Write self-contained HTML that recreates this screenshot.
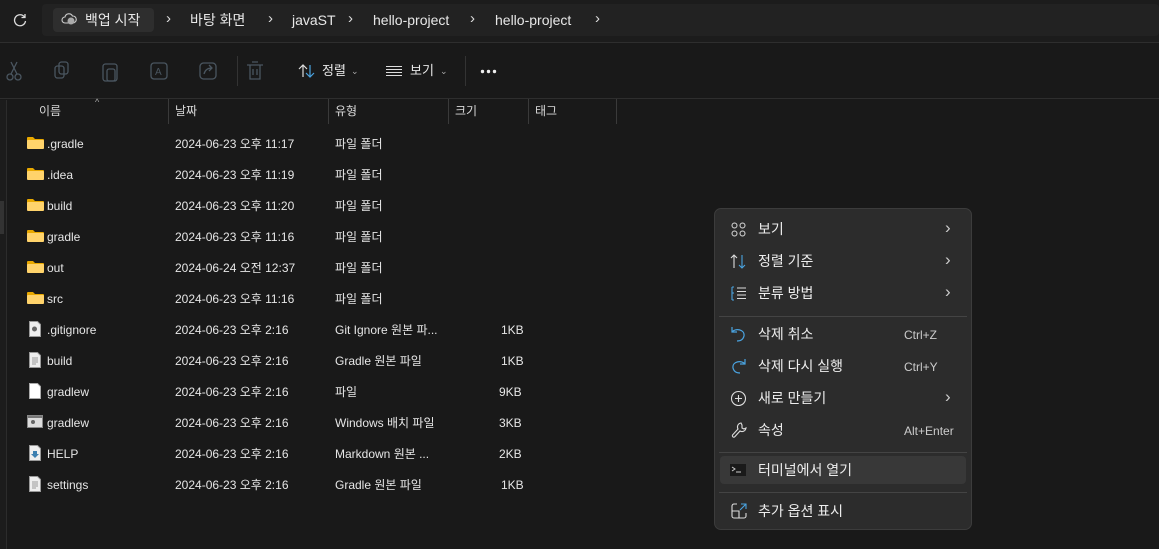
<!DOCTYPE html>
<html><head><meta charset="utf-8"><style>
*{margin:0;padding:0;box-sizing:border-box}
body{width:1159px;height:549px;overflow:hidden;background:#191919;font-family:"Liberation Sans","Noto Sans CJK KR",sans-serif;color:#e6e6e6;position:relative;font-size:12px}
span{line-height:16px}
.abs{position:absolute}
.top{left:0;top:0;width:1159px;height:43px;background:#1c1c1c;border-bottom:1px solid #2e2e2e}
.crumb{left:42px;top:4px;width:1117px;height:32px;background:#222;border-radius:4px}
.bc{position:absolute;top:12px;font-size:14px;color:#e8e8e8}
.chev{position:absolute;top:11px;font-size:15px;color:#ddd}
.tb{left:0;top:44px;width:1159px;height:55px;background:#191919;border-bottom:1px solid #2e2e2e}
.hdr{top:103px;font-size:12px;color:#d8d8d8}
.vl{top:99px;width:1px;height:25px;background:#3a3a3a}
.row{position:absolute;left:0;height:20px;font-size:12px}
.row span{position:absolute;top:2px;white-space:nowrap}
.menu{left:714px;top:208px;width:258px;height:322px;background:#2c2c2c;border:1px solid #3c3c3c;border-radius:7px}
.mi{position:absolute;left:0;width:256px;height:30px;font-size:14px;color:#eee}
.mi .t{position:absolute;left:43px;top:7px}
.mi .k{position:absolute;left:189px;top:8px;font-size:12px;color:#ccc}
.mi .a{position:absolute;left:230px;top:6px;color:#ccc;font-size:17px}
.sep{position:absolute;left:4px;width:248px;height:1px;background:#444}
</style></head><body>
<div class="abs top"></div>
<svg class="abs" style="left:12px;top:12px" width="16" height="16" viewBox="0 0 16 16"><path d="M12.5 5A5.5 5.5 0 1 0 13.5 9" fill="none" stroke="#ddd" stroke-width="1.3"/><path d="M13 2v3.5H9.5" fill="none" stroke="#ddd" stroke-width="1.3"/></svg>
<div class="abs crumb"></div>
<div class="abs" style="left:53px;top:8px;width:101px;height:24px;background:#2e2e2e;border-radius:4px"></div>
<svg class="abs" style="left:61px;top:12px" width="16" height="14" viewBox="0 0 16 14"><path d="M4 11a3 3 0 0 1 0-6 4 4 0 0 1 7.5-1A3.5 3.5 0 0 1 12 11z" fill="none" stroke="#ccc" stroke-width="1.1"/><circle cx="10" cy="9" r="3.5" fill="#aaa"/></svg>
<span class="bc" style="left:85px">백업 시작</span>
<span class="chev" style="left:166px">›</span>
<span class="bc" style="left:190px">바탕 화면</span>
<span class="chev" style="left:268px">›</span>
<span class="bc" style="left:292px">javaST</span>
<span class="chev" style="left:348px">›</span>
<span class="bc" style="left:373px">hello-project</span>
<span class="chev" style="left:470px">›</span>
<span class="bc" style="left:495px">hello-project</span>
<span class="chev" style="left:595px">›</span>
<div class="abs tb"></div>
<svg class="abs" style="left:0;top:56px" width="460" height="30" viewBox="0 0 460 30" fill="none" stroke="#4a5660" stroke-width="1.3">
<circle cx="10" cy="21" r="3"/><circle cx="18" cy="21" r="3"/><path d="M11 18 17 6M17 18 11 6"/>
<rect x="55" y="10" width="9" height="12" rx="2.5"/><rect x="59" y="6" width="9" height="12" rx="2.5"/>
<rect x="103" y="8" width="14" height="17" rx="2.5"/><rect x="107" y="13" width="8" height="12" rx="2"/>
<rect x="151" y="7" width="16" height="16" rx="3"/><text x="155" y="19" font-size="10" fill="#4a5660" stroke="none">A</text>
<rect x="200" y="7" width="16" height="16" rx="3.5"/><path d="M204 18c1-4 4-6 8-6M209 9l3 3-3 3"/>
<path d="M247 9h16M250 9v14h10V9M252 6h6M253 13v6M257 13v6"/>
</svg>
<div class="abs" style="left:237px;top:56px;width:1px;height:30px;background:#333"></div>
<svg class="abs" style="left:298px;top:63px" width="18" height="16" viewBox="0 0 18 16" fill="none" stroke-width="1.2"><path d="M5 14V2M1 6l4-4 4 4" stroke="#ddd"/><path d="M12 2v12M8 10l4 4 4-4" stroke="#4aa3e0"/></svg>
<span class="abs" style="left:322px;top:63px;font-size:13px">정렬</span><span class="abs" style="left:351px;top:63px;font-size:9px;color:#aaa">⌄</span>
<svg class="abs" style="left:386px;top:65px" width="16" height="12"><path d="M0 1.5h16M0 4.5h16M0 7.5h16M0 10.5h16" stroke="#ddd"/></svg>
<span class="abs" style="left:410px;top:63px;font-size:13px">보기</span><span class="abs" style="left:440px;top:63px;font-size:9px;color:#aaa">⌄</span>
<div class="abs" style="left:465px;top:56px;width:1px;height:30px;background:#333"></div>
<svg class="abs" style="left:480px;top:69px" width="18" height="5"><circle cx="2.5" cy="2.5" r="1.7" fill="#eee"/><circle cx="8.5" cy="2.5" r="1.7" fill="#eee"/><circle cx="14.5" cy="2.5" r="1.7" fill="#eee"/></svg>
<div class="abs" style="left:0;top:100px;width:7px;height:449px;background:#1c1c1c;border-right:1px solid #2c2c2c"></div>
<div class="abs" style="left:0;top:201px;width:4px;height:33px;background:#333"></div>
<span class="abs hdr" style="left:39px">이름</span>
<span class="abs" style="left:95px;top:94px;font-size:9px;color:#aaa">^</span>
<div class="abs vl" style="left:168px"></div><span class="abs hdr" style="left:175px">날짜</span>
<div class="abs vl" style="left:328px"></div><span class="abs hdr" style="left:335px">유형</span>
<div class="abs vl" style="left:448px"></div><span class="abs hdr" style="left:455px">크기</span>
<div class="abs vl" style="left:528px"></div><span class="abs hdr" style="left:535px">태그</span>
<div class="abs vl" style="left:616px"></div>

<div class="row" style="top:134px"><svg class="abs" style="left:27px;top:2px" width="17" height="13"><path d="M0 2a1 1 0 0 1 1-1h5l2 2h8a1 1 0 0 1 1 1v8H0z" fill="#e8a800"/><rect x="0" y="4" width="17" height="9" rx="1" fill="#ffd36b"/></svg><span style="left:47px">.gradle</span><span style="left:175px">2024-06-23 오후 11:17</span><span style="left:335px">파일 폴더</span></div>
<div class="row" style="top:165px"><svg class="abs" style="left:27px;top:2px" width="17" height="13"><path d="M0 2a1 1 0 0 1 1-1h5l2 2h8a1 1 0 0 1 1 1v8H0z" fill="#e8a800"/><rect x="0" y="4" width="17" height="9" rx="1" fill="#ffd36b"/></svg><span style="left:47px">.idea</span><span style="left:175px">2024-06-23 오후 11:19</span><span style="left:335px">파일 폴더</span></div>
<div class="row" style="top:196px"><svg class="abs" style="left:27px;top:2px" width="17" height="13"><path d="M0 2a1 1 0 0 1 1-1h5l2 2h8a1 1 0 0 1 1 1v8H0z" fill="#e8a800"/><rect x="0" y="4" width="17" height="9" rx="1" fill="#ffd36b"/></svg><span style="left:47px">build</span><span style="left:175px">2024-06-23 오후 11:20</span><span style="left:335px">파일 폴더</span></div>
<div class="row" style="top:227px"><svg class="abs" style="left:27px;top:2px" width="17" height="13"><path d="M0 2a1 1 0 0 1 1-1h5l2 2h8a1 1 0 0 1 1 1v8H0z" fill="#e8a800"/><rect x="0" y="4" width="17" height="9" rx="1" fill="#ffd36b"/></svg><span style="left:47px">gradle</span><span style="left:175px">2024-06-23 오후 11:16</span><span style="left:335px">파일 폴더</span></div>
<div class="row" style="top:258px"><svg class="abs" style="left:27px;top:2px" width="17" height="13"><path d="M0 2a1 1 0 0 1 1-1h5l2 2h8a1 1 0 0 1 1 1v8H0z" fill="#e8a800"/><rect x="0" y="4" width="17" height="9" rx="1" fill="#ffd36b"/></svg><span style="left:47px">out</span><span style="left:175px">2024-06-24 오전 12:37</span><span style="left:335px">파일 폴더</span></div>
<div class="row" style="top:289px"><svg class="abs" style="left:27px;top:2px" width="17" height="13"><path d="M0 2a1 1 0 0 1 1-1h5l2 2h8a1 1 0 0 1 1 1v8H0z" fill="#e8a800"/><rect x="0" y="4" width="17" height="9" rx="1" fill="#ffd36b"/></svg><span style="left:47px">src</span><span style="left:175px">2024-06-23 오후 11:16</span><span style="left:335px">파일 폴더</span></div>
<div class="row" style="top:320px"><svg class="abs" style="left:29px;top:1px" width="12" height="16"><path d="M.5.5h8l3 3v12H.5z" fill="#eee" stroke="#999"/><circle cx="5.5" cy="8" r="2.5" fill="#666"/></svg><span style="left:47px">.gitignore</span><span style="left:175px">2024-06-23 오후 2:16</span><span style="left:335px">Git Ignore 원본 파...</span><span style="left:501px">1KB</span></div>
<div class="row" style="top:351px"><svg class="abs" style="left:29px;top:1px" width="12" height="16"><path d="M.5.5h8l3 3v12H.5z" fill="#eee" stroke="#999"/><path d="M3 6h6M3 8h6M3 10h6M3 12h4" stroke="#999"/></svg><span style="left:47px">build</span><span style="left:175px">2024-06-23 오후 2:16</span><span style="left:335px">Gradle 원본 파일</span><span style="left:501px">1KB</span></div>
<div class="row" style="top:382px"><svg class="abs" style="left:29px;top:1px" width="12" height="16"><path d="M.5.5h8l3 3v12H.5z" fill="#fff" stroke="#aaa"/></svg><span style="left:47px">gradlew</span><span style="left:175px">2024-06-23 오후 2:16</span><span style="left:335px">파일</span><span style="left:499px">9KB</span></div>
<div class="row" style="top:413px"><svg class="abs" style="left:27px;top:2px" width="16" height="13"><rect x=".5" y=".5" width="15" height="12" fill="#ddd" stroke="#888"/><rect x="1" y="1" width="14" height="2" fill="#777"/><circle cx="6" cy="7" r="2" fill="#666"/></svg><span style="left:47px">gradlew</span><span style="left:175px">2024-06-23 오후 2:16</span><span style="left:335px">Windows 배치 파일</span><span style="left:499px">3KB</span></div>
<div class="row" style="top:444px"><svg class="abs" style="left:29px;top:1px" width="12" height="16"><path d="M.5.5h8l3 3v12H.5z" fill="#eee" stroke="#999"/><path d="M4 6h4v3h2l-4 4-4-4h2z" fill="#3c7fb0"/></svg><span style="left:47px">HELP</span><span style="left:175px">2024-06-23 오후 2:16</span><span style="left:335px">Markdown 원본 ...</span><span style="left:499px">2KB</span></div>
<div class="row" style="top:475px"><svg class="abs" style="left:29px;top:1px" width="12" height="16"><path d="M.5.5h8l3 3v12H.5z" fill="#eee" stroke="#999"/><path d="M3 6h6M3 8h6M3 10h6M3 12h4" stroke="#999"/></svg><span style="left:47px">settings</span><span style="left:175px">2024-06-23 오후 2:16</span><span style="left:335px">Gradle 원본 파일</span><span style="left:501px">1KB</span></div>

<div class="abs menu">
<div class="mi" style="top:5px"><svg class="abs" style="left:16px;top:8px" width="15" height="15" fill="none" stroke="#ddd"><circle cx="3.5" cy="3.5" r="2.5"/><circle cx="11.5" cy="3.5" r="2.5"/><circle cx="3.5" cy="11.5" r="2.5"/><circle cx="11.5" cy="11.5" r="2.5"/></svg><span class="t">보기</span><span class="a">›</span></div>
<div class="mi" style="top:37px"><svg class="abs" style="left:15px;top:8px" width="17" height="15" fill="none" stroke-width="1.1"><path d="M4 14V1M1 4l3-3 3 3" stroke="#ddd"/><path d="M12 1v13M9 11l3 3 3-3" stroke="#4aa3e0"/></svg><span class="t">정렬 기준</span><span class="a">›</span></div>
<div class="mi" style="top:69px"><svg class="abs" style="left:16px;top:8px" width="16" height="15" fill="none" stroke-width="1.1"><path d="M1 1v13M1 1h2M1 7h2M1 14h2" stroke="#4aa3e0"/><path d="M6 2h9M6 5.5h9M6 9h9M6 12.5h9" stroke="#ddd"/></svg><span class="t">분류 방법</span><span class="a">›</span></div>
<div class="sep" style="top:107px"></div>
<div class="mi" style="top:110px"><svg class="abs" style="left:16px;top:7px" width="16" height="16" fill="none" stroke="#4aa3e0" stroke-width="1.2"><path d="M1 1v5h5M1 6c3-4 13-3 12 4-1 4-4 5-7 5"/></svg><span class="t">삭제 취소</span><span class="k">Ctrl+Z</span></div>
<div class="mi" style="top:142px"><svg class="abs" style="left:16px;top:7px" width="16" height="16" fill="none" stroke="#4aa3e0" stroke-width="1.2"><path d="M14 1v5H9M14 6C11 2 1 3 2 10c1 4 4 5 7 5"/></svg><span class="t">삭제 다시 실행</span><span class="k">Ctrl+Y</span></div>
<div class="mi" style="top:174px"><svg class="abs" style="left:15px;top:7px" width="17" height="17" fill="none" stroke="#ddd" stroke-width="1.1"><circle cx="8.5" cy="8.5" r="7"/><path d="M8.5 5v7M5 8.5h7"/></svg><span class="t">새로 만들기</span><span class="a">›</span></div>
<div class="mi" style="top:206px"><svg class="abs" style="left:16px;top:7px" width="16" height="17" fill="none" stroke="#ddd" stroke-width="1.1"><path d="M10 1a4 4 0 0 0-3 6L1.5 13a1.5 1.5 0 0 0 2 2L9 9a4 4 0 0 0 6-3l-2 1-2-1V3z"/></svg><span class="t">속성</span><span class="k">Alt+Enter</span></div>
<div class="sep" style="top:243px"></div>
<div class="abs" style="left:5px;top:247px;width:246px;height:28px;background:#383838;border-radius:4px"></div>
<div class="mi" style="top:246px"><svg class="abs" style="left:15px;top:9px" width="16" height="12"><rect width="16" height="12" fill="#1a1a1a"/><path d="M2 3l3 2-3 2M6 8h5" stroke="#ccc" fill="none"/></svg><span class="t">터미널에서 열기</span></div>
<div class="sep" style="top:283px"></div>
<div class="mi" style="top:287px"><svg class="abs" style="left:16px;top:7px" width="16" height="16" fill="none" stroke-width="1.1"><path d="M6 1H3a2 2 0 0 0-2 2v10a2 2 0 0 0 2 2h10a2 2 0 0 0 2-2v-3M1 8h7v7" stroke="#ddd"/><path d="M9 7l6-6M10 1h5v5" stroke="#4aa3e0"/></svg><span class="t">추가 옵션 표시</span></div>
</div>
</body></html>
